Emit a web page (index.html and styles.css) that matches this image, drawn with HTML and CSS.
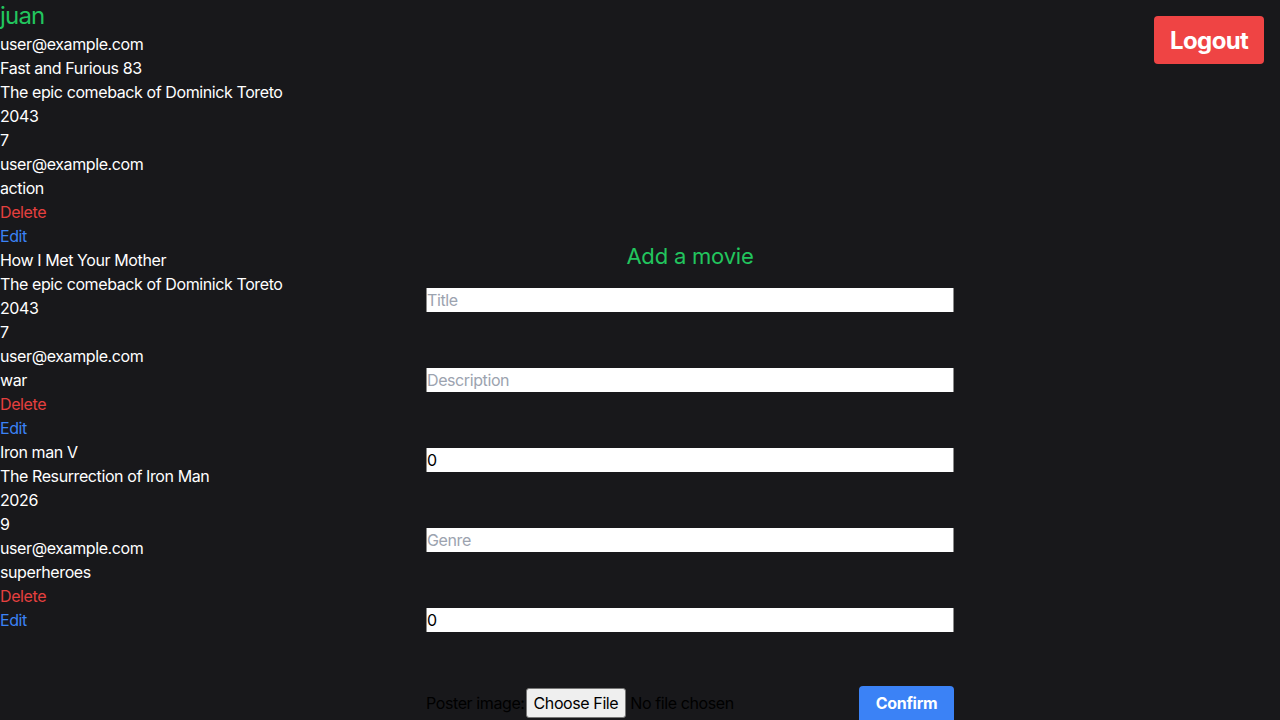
FILE: index.html
```html
<!DOCTYPE html>
<html lang="en">
<head>
<meta charset="utf-8">
<title>Movies</title>
<link rel="stylesheet" href="styles.css">
</head>
<body>
<button class="logout">Logout</button>
<div class="layout">
  <div class="list">
    <h1 class="username">juan</h1>
    <p>user@example.com</p>
    <div class="movie">
      <p>Fast and Furious 83</p>
      <p>The epic comeback of Dominick Toreto</p>
      <p>2043</p>
      <p>7</p>
      <p>user@example.com</p>
      <p>action</p>
      <a class="delete">Delete</a>
      <a class="edit">Edit</a>
    </div>
    <div class="movie">
      <p>How I Met Your Mother</p>
      <p>The epic comeback of Dominick Toreto</p>
      <p>2043</p>
      <p>7</p>
      <p>user@example.com</p>
      <p>war</p>
      <a class="delete">Delete</a>
      <a class="edit">Edit</a>
    </div>
    <div class="movie">
      <p>Iron man V</p>
      <p>The Resurrection of Iron Man</p>
      <p>2026</p>
      <p>9</p>
      <p>user@example.com</p>
      <p>superheroes</p>
      <a class="delete">Delete</a>
      <a class="edit">Edit</a>
    </div>
  </div>
  <form class="form">
    <h2 class="form-title">Add a movie</h2>
    <input class="field" type="text" placeholder="Title">
    <input class="field" type="text" placeholder="Description">
    <input class="field" type="number" value="0">
    <input class="field" type="text" placeholder="Genre">
    <input class="field" type="number" value="0">
    <div class="file-row">
      <label class="poster">Poster image:<input class="file" type="file"></label>
      <button class="confirm" type="button">Confirm</button>
    </div>
  </form>
</div>
</body>
</html>
```

FILE: styles.css
```css
* { box-sizing: border-box; }
html, body { margin: 0; padding: 0; }
body {
  background: #18181b;
  color: #ffffff;
  font-family: Inter, "Noto Sans", sans-serif;
  font-size: 16px;
  line-height: 24px;
  letter-spacing: -0.4px;
  height: 720px;
  overflow: hidden;
}
p, h1, h2 { margin: 0; font-weight: normal; }
.logout {
  position: absolute;
  top: 16px;
  right: 16px;
  background: #ef4444;
  color: #fff;
  border: none;
  border-radius: 4px;
  font-family: inherit;
  font-weight: 700;
  font-size: 24px;
  line-height: 32px;
  letter-spacing: -0.6px;
  padding: 9px 16px 7px;
  width: 110px;
}
.layout { display: flex; }
.list { width: 426px; flex: none; }
.username { color: #22c55e; font-size: 24px; line-height: 32px; letter-spacing: -0.8px; }
.movie { display: flex; flex-direction: column; }
.delete { color: #e5403f; }
.edit { color: #3b82f6; }
.form {
  width: 528px;
  margin-top: 240px;
  display: flex;
  flex-direction: column;
}
.form-title {
  color: #22c55e;
  font-size: 22px;
  line-height: 32px;
  letter-spacing: -0.2px;
  text-align: center;
  margin-bottom: 16px;
}
.field {
  display: block;
  height: 24px;
  padding: 0;
  border: none;
  border-left: 1px solid #8a8a8a;
  border-right: 1px solid #8a8a8a;
  background: #fff;
  color: #000;
  font-family: inherit;
  font-size: 16px;
  line-height: 24px;
  letter-spacing: -0.4px;
  margin-bottom: 56px;
  outline: none;
}
.field::placeholder { color: #9ca3af; }
.field::-webkit-inner-spin-button { -webkit-appearance: none; }
.file-row {
  display: flex;
  justify-content: space-between;
  align-items: flex-start;
  margin-top: -2px;
}
.poster {
  color: #000;
  display: flex;
  align-items: center;
  white-space: nowrap;
  flex: none;
  margin-top: 2px;
}
.file { font-family: inherit; font-size: 16px; color: #000; letter-spacing: -0.4px; }
.file::file-selector-button {
  font-family: inherit;
  font-size: 16px;
  letter-spacing: -0.4px;
  height: 30px;
  padding: 0 7px;
  margin: 0 4px 0 1px;
  border: 1px solid #767676;
  border-radius: 3px;
  background: #efefef;
  color: #000;
}
.confirm {
  background: #3b82f6;
  color: #fff;
  border: none;
  border-radius: 4px;
  font-family: inherit;
  font-weight: 700;
  font-size: 16px;
  line-height: 24px;
  letter-spacing: -0.3px;
  padding: 5px 16px 11px;
  width: 95px;
  flex: none;
}
```
